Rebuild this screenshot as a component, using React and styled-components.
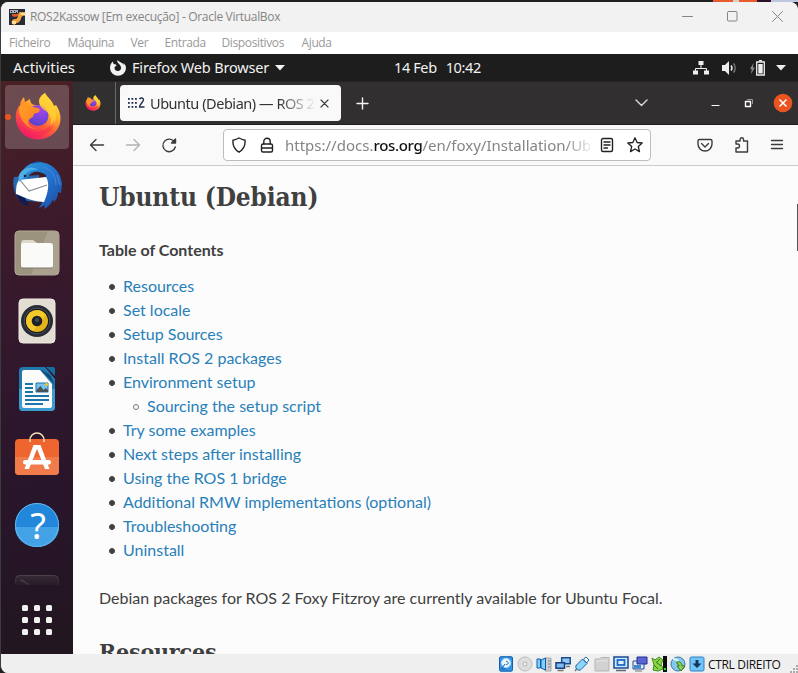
import React from 'react';
import styled, { createGlobalStyle } from 'styled-components';

const Global = createGlobalStyle`
  *, *::before { box-sizing: border-box; }
  body { margin: 0; background: #202020; overflow: hidden; }
  svg { display: block; flex: none; }
`;

const UI = '"Noto Sans", "Open Sans", sans-serif';

const Desktop = styled.div`
  width: 798px; height: 673px; display: flex; flex-direction: column;
  background: #202020; overflow: hidden;
`;
const DesktopStrip = styled.div`
  height: 2px; flex: none; display: flex; justify-content: flex-end;
  background: #222122;
`;
const StripPiece = styled.div`
  width: ${(p) => p.$w}px; background: ${(p) => p.$c};
`;
const Window = styled.div`
  flex: 1; min-height: 0; display: flex; flex-direction: column;
  border-left: 1px solid #3c3c3c; border-radius: 8px 8px 0 8px; overflow: hidden;
  background: #efefef;
`;
const TitleBar = styled.header`
  height: 30px; flex: none; display: flex; align-items: center;
  padding: 0 15px 0 8px; background: #f2f2f2;
  font: 12px "Open Sans", sans-serif; letter-spacing: -0.31px; color: #858585;
`;
const TitleText = styled.span`
  margin-left: 5px; flex: 1; white-space: nowrap; line-height: 28px;
`;
const WindowControls = styled.div`
  display: flex; gap: 34px; align-items: center; margin-bottom: 2px;
`;
const MenuBar = styled.nav`
  height: 22px; flex: none; display: flex; align-items: center;
  padding-left: 8px; background: #fff; white-space: nowrap;
  font: 12px/22px "Open Sans", sans-serif; letter-spacing: -0.37px; color: #999;
`;
const MenuItem = styled.span`
  width: ${(p) => p.$w}px; height: 22px;
`;
const Guest = styled.div`
  height: 600px; flex: none; display: flex; flex-direction: column;
`;
const TopBar = styled.div`
  height: 27px; flex: none; display: grid; grid-template-columns: 393px 299px 1fr;
  align-items: center; background: #1d1d1d; color: #f2f2f2;
  font: 15px/27px ${UI}; white-space: nowrap;
`;
const TopLeft = styled.div`
  display: flex; align-items: center; padding-left: 12px;
`;
const Activities = styled.span`
  width: 97px; letter-spacing: -0.05px;
`;
const AppName = styled.span`
  width: 138px; margin: 0 5px 0 6px; font-size: 14.5px; letter-spacing: -0.16px;
`;
const Clock = styled.div`
  display: flex; gap: 9px; font-size: 14.5px; letter-spacing: -0.38px;
`;
const Tray = styled.div`
  display: flex; align-items: center;
  svg + svg { margin-left: 13px; }
  svg:nth-child(3) { margin-left: 12px; }
  svg:last-child { margin-left: 10px; }
`;
const Workspace = styled.div`
  flex: 1; min-height: 0; display: flex;
`;
const Dock = styled.aside`
  width: 72px; flex: none; display: flex; flex-direction: column; align-items: center;
  padding-top: 4px;
  background: linear-gradient(170deg, #4a2025 0%, #3b1a2c 28%, #2e172c 55%, #28152a 75%, #21161f 100%);
`;
const DockTile = styled.div`
  position: relative; width: 64px; height: 64px; flex: none; margin-bottom: 4px;
  border-radius: 4px; background: ${(p) => (p.$active ? 'rgba(255,255,255,.2)' : 'transparent')};
`;
const RunningDot = styled.i`
  position: absolute; left: 0; top: 29px; width: 6px; height: 6px;
  border-radius: 50%; background: #e95420;
`;
const DockCut = styled.div`
  width: 44px; height: 10px; margin-top: 14px; overflow: hidden; flex: none;
  mask-image: linear-gradient(#000, rgba(0,0,0,.3));
`;
const AppGrid = styled.div`
  display: grid; grid-template-columns: repeat(3, 6px); gap: 6px; margin-top: 20px;
`;
const AppDot = styled.i`
  width: 6px; height: 6px; border-radius: 1.5px; background: #f1f1ef;
`;
const Browser = styled.main`
  flex: 1; min-width: 0; display: flex; flex-direction: column; background: #fcfcfc;
`;
const TabStrip = styled.div`
  height: 44px; flex: none; display: flex; align-items: center;
  background: #322f30; border-top: 1px solid #262425; border-bottom: 1px solid #201e1f;
`;
const PinnedTab = styled.div`
  width: 43px; height: 100%; display: flex; align-items: center; padding-left: 12px;
  border-right: 1px solid #6b696a;
`;
const Tab = styled.div`
  width: 221px; height: 36px; margin: 0 15px 0 4px; display: flex; align-items: center;
  padding: 0 12px 0 8px; border-radius: 4px; background: #f9f9fa;
`;
const TabLabel = styled.span`
  flex: 1; min-width: 0; margin-left: 5px; overflow: hidden; white-space: nowrap;
  font: 14.5px/36px ${UI}; letter-spacing: -0.46px; color: #333;
  mask-image: linear-gradient(90deg, #000 128px, transparent 166px);
`;
const TabStripEnd = styled.div`
  flex: 1; display: flex; align-items: center; justify-content: flex-end;
  padding-right: 5px;
`;
const Spacer = styled.span`
  width: ${(p) => p.$w}px; flex: none;
`;
const NavBar = styled.div`
  height: 41px; flex: none; display: flex; align-items: center;
  padding-left: 15px; background: #f9f9fa; border-bottom: 1px solid #cbcbcd;
`;
const NavButtons = styled.div`
  width: 135px; display: flex; gap: 18px; align-items: center;
`;
const AddressBar = styled.div`
  width: 428px; height: 32px; display: flex; align-items: center; padding: 0 7px;
  background: #fff; border: 1px solid #bdbdbf; border-radius: 4px;
`;
const Url = styled.span`
  width: 308px; margin: 0 6px 0 10px; overflow: hidden; white-space: nowrap;
  font: 15px/30px ${UI}; color: #858587;
  mask-image: linear-gradient(90deg, #000 280px, transparent 310px);
  b { font-weight: 500; color: #111; letter-spacing: -0.32px; }
`;
const NavActions = styled.div`
  display: flex; gap: 18px; align-items: center; margin-left: 45px;
`;
const Page = styled.div`
  flex: 1; min-height: 0; display: flex; justify-content: space-between; overflow: hidden;
`;
const Article = styled.article`
  padding: 11px 0 0 26px; color: #404040; font: 16px/24px Lato, sans-serif;
`;
const Heading = styled.h1`
  margin: 0; height: ${(p) => p.$h}px; white-space: nowrap;
  font: bold ${(p) => p.$size}px/${(p) => p.$lh}px "DejaVu Serif Condensed", "DejaVu Serif", serif;
  font-stretch: condensed;
  letter-spacing: ${(p) => p.$ls}px;
`;
const TocTitle = styled.p`
  margin: 0 0 12px; font-weight: bold;
`;
const Toc = styled.ul`
  margin: 0; padding: 0 0 0 10px; list-style: none;
`;
const SubToc = styled(Toc)`
  padding-left: 24px;
`;
const TocItem = styled.li`
  height: 24px; color: #2980b9;
  &::before {
    content: ''; display: inline-block; width: 6px; height: 6px; margin-right: 8px;
    vertical-align: 2px; border-radius: 50%;
    background: ${(p) => (p.$nested ? 'transparent' : '#404040')};
    border: 1px solid ${(p) => (p.$nested ? '#777' : '#404040')};
  }
`;
const Paragraph = styled.p`
  margin: 24px 0 26px; white-space: nowrap; letter-spacing: 0.002px;
`;
const ScrollThumb = styled.div`
  width: 1px; height: 47px; margin-top: 38px; background: #555;
`;
const StatusBar = styled.footer`
  flex: 1; display: flex; align-items: center; justify-content: flex-end;
  background: #efefef; font: 12px/17px "Open Sans", sans-serif; color: #111;
`;
const StatusIcons = styled.div`
  display: flex; gap: 3.1px; margin: 1px 3px 0 0;
`;
const HostKey = styled.span`
  width: 82px; letter-spacing: -0.32px; white-space: nowrap; padding-top: 2px;
`;

function FirefoxArt({ id, size }) {
  return (
    <svg width={size} height={size} viewBox="0 0 48 48">
      <defs>
        <linearGradient id={id + 'a'} x1=".85" y1="0" x2=".25" y2="1">
          <stop offset="0" stopColor="#fff044" /><stop offset=".35" stopColor="#ffb52b" />
          <stop offset=".62" stopColor="#ff5f38" /><stop offset="1" stopColor="#ee1370" />
        </linearGradient>
        <radialGradient id={id + 'b'} cx=".65" cy=".25" r=".8">
          <stop offset="0" stopColor="#a443ed" /><stop offset="1" stopColor="#5544c9" />
        </radialGradient>
        <linearGradient id={id + 'c'} x1="0" y1="0" x2="1" y2="1">
          <stop offset="0" stopColor="#ffa126" /><stop offset="1" stopColor="#ff7b24" />
        </linearGradient>
      </defs>
      <path fill={`url(#${id}a)`} d="M31 1c2 4 7 7 9 13l2-1c6 8 6 19 0 26-10 12-30 11-37-2C0 28 1 18 6 13c0-3 2-6 4-8l1 5 5-3c0 3 2 6 5 6h5C23 8 27 3 31 1Z" />
      <circle cx="24" cy="23.5" r="10.5" fill={`url(#${id}b)`} />
      <path fill={`url(#${id}c)`} d="M5 17c2-5 5-7 9-5 3 3 6 3 10 4 3 1 2 4-1 5-3 0-4 2-4 4-3 1-5 3-5 6 1 3 4 5 8 6-9 0-17-10-17-20Z" />
      <path fill="#ffd233" opacity=".75" d="M31 1c2 5 8 8 9 14 4 9 2 17-4 20 2-6 1-12-3-15-2-2-6-3-7-7-1-5 2-10 5-12Z" />
      <path fill="#f91f5b" opacity=".4" d="M4 29c5 9 15 13 25 9 6-2 9-6 11-10 0 10-8 17-18 17C13 45 6 39 4 29Z" />
    </svg>
  );
}

const Thunderbird = () => (
  <svg width="64" height="64" viewBox="0 0 64 64">
    <defs>
      <linearGradient id="tb" x1="0" y1="0" x2="1" y2="1">
        <stop offset="0" stopColor="#2a9bd8" /><stop offset=".5" stopColor="#2474cf" /><stop offset="1" stopColor="#1b4aa4" />
      </linearGradient>
    </defs>
    <path fill="#2a66ae" d="M9 24c-2 6 0 17 5 23l20 2V22Z" />
    <path fill="url(#tb)" d="M17 18c4-5 9-9 16-9 13 0 23 9 24 22l-1 9-3-1c0 4-1 7-4 10l-1-3c-1 4-5 8-9 10l1-4-6 3 7-13V22c-6-5-16-5-19 4l-6 2c-3-3-2-8 1-10Z" />
    <path fill="#fff" d="m14 27 27-3c4 6 2 16-2 25-9 0-19-4-28-8 0-5 0-10 3-14Z" />
    <path fill="none" stroke="#8b8b94" strokeWidth="1.1" d="m15 27 9 11 18-6" />
    <path fill="#101b53" d="m11 41 9 4 4 8c-7-1-11-6-13-12Z" />
    <path fill="#4faee4" d="M17 18c6-5 13-4 16-1-7-1-12 2-14 7l-4 5c-3-4-1-8 2-11Z" />
    <path fill="none" stroke="#4b86da" d="M38 14c9 3 13 9 13 18M52 22l3 10" />
    <circle cx="20" cy="23" r="1.3" fill="#221c35" />
    <path fill="#174b9c" d="m36 9-4-1-7 3Z" />
  </svg>
);

const Files = () => (
  <svg width="64" height="64" viewBox="0 0 64 64">
    <rect x="10" y="10" width="44" height="44" rx="4" fill="#9c937f" stroke="#b3aa97" />
    <path d="M43 10h7a4 4 0 0 1 4 4v36a4 4 0 0 1-4 4H26Z" fill="#aaa18e" />
    <path d="M16 22a3 3 0 0 1 3-3h9l4 3v8H16Z" fill="#dcd8ca" />
    <rect x="16" y="22" width="32" height="25" rx="3" fill="#fafaf8" />
    <path d="M17 47h30" stroke="#817967" />
  </svg>
);

const Rhythmbox = () => (
  <svg width="64" height="64" viewBox="0 0 64 64">
    <rect x="14" y="10" width="36" height="44" rx="4" fill="#e3ded4" stroke="#f0ece4" />
    <circle cx="32" cy="32" r="16" fill="#292c36" />
    <circle cx="32" cy="32" r="12.8" fill="#14171d" stroke="#5a5d63" strokeWidth=".8" />
    <circle cx="32" cy="32" r="11" fill="#e4b51b" />
    <path d="M21 32a11 11 0 0 1 20-6L28 42a11 11 0 0 1-7-10Z" fill="#f4c92b" />
    <circle cx="32" cy="32" r="5.3" fill="#1d2026" />
    <circle cx="32" cy="31" r="2.2" fill="#42464f" />
  </svg>
);

const Writer = () => (
  <svg width="64" height="64" viewBox="0 0 64 64">
    <path d="M18 10h22l10 12v28a4 4 0 0 1-4 4H18a4 4 0 0 1-4-4V14a4 4 0 0 1 4-4Z" fill="#2078ad" />
    <path d="M14 32h36v18a4 4 0 0 1-4 4H18a4 4 0 0 1-4-4Z" fill="#3b9cd0" />
    <path d="M41 10h7a2 2 0 0 1 2 2v7Z" fill="#166d9f" />
    <path d="M19 13h16l12 14v22a2 2 0 0 1-2 2H19a2 2 0 0 1-2-2V15a2 2 0 0 1 2-2Z" fill="#fbfbfa" />
    <path d="m35 12 15 16-5-10Z" fill="#0d4c74" />
    <path d="M20 27h8M20 31h8M20 35h8M20 39h24M20 43h24M20 47h18" stroke="#1c76ad" strokeWidth="2" />
    <path d="M31 26h12v9H31Z" fill="#75c3ea" stroke="#1c76ad" />
    <circle cx="41.5" cy="27.5" r="1.6" fill="#f4c52d" />
    <path d="M31.5 35v-2l4-4 3 4 2-2 2.5 2v2Z" fill="#4b5257" />
  </svg>
);

const Software = () => (
  <svg width="64" height="64" viewBox="0 0 64 64">
    <rect x="10" y="14" width="44" height="36" rx="4" fill="#ef6530" />
    <path d="M10 32h44v14a4 4 0 0 1-4 4H14a4 4 0 0 1-4-4Z" fill="#f17b4a" />
    <path d="M25 17v-2a7 7 0 0 1 14 0v2" fill="none" stroke="#f4e2b8" strokeWidth="1.5" />
    <path d="M28.5 20h7l9 24H40L32 24l-8 20h-4.5Z" fill="#fff" />
    <rect x="18" y="35" width="28" height="4.5" rx="2.2" fill="#fff" />
  </svg>
);

const QuestionMark = styled.text`
  font: 36px "Noto Sans", sans-serif; fill: #fff;
`;
const Help = () => (
  <svg width="64" height="64" viewBox="0 0 64 64">
    <circle cx="32" cy="32" r="22" fill="#2287db" />
    <path d="M10 34a22 20 0 0 0 44 0Z" fill="#43a2e6" />
    <circle cx="32" cy="32" r="21.5" fill="none" stroke="#62b5ee" />
    <QuestionMark x="33" y="45.5" textAnchor="middle">?</QuestionMark>
  </svg>
);

const Stroke = ({ w = 16, h = w, c = '#3b3b3d', sw = 1.4, d, children }) => (
  <svg width={w} height={h} viewBox={`0 0 ${w} ${h}`} fill="none" stroke={c} strokeWidth={sw} strokeLinecap="round" strokeLinejoin="round">
    {d && <path d={d} />}{children}
  </svg>
);

const menu = [['Ficheiro', 58.5], ['Máquina', 63], ['Ver', 34], ['Entrada', 57], ['Dispositivos', 80], ['Ajuda', 40]];
const toc = [
  'Resources', 'Set locale', 'Setup Sources', 'Install ROS 2 packages', 'Environment setup',
  'Try some examples', 'Next steps after installing', 'Using the ROS 1 bridge',
  'Additional RMW implementations (optional)', 'Troubleshooting', 'Uninstall',
];

const DeviceIcons = () => (
  <StatusIcons>
    <svg width="16" height="16"><rect x="1.5" y=".7" width="13" height="14.5" rx="1.5" fill="#2f93e6" stroke="#155da9" /><circle cx="8" cy="7" r="4.7" fill="#e9f7ff" stroke="#9bd4fb" /><path d="M8 5.5a1.6 1.6 0 1 1 0 3M7 8l-3.5 5h4" stroke="#1c5fae" fill="none" /></svg>
    <svg width="16" height="16"><circle cx="8" cy="8" r="7" fill="#dedede" stroke="#bcbcbc" /><circle cx="8" cy="8" r="2" fill="#f5f5f5" stroke="#b1b1b1" /></svg>
    <svg width="16" height="16"><path d="M9 2h6v13H9z" fill="#ccc" stroke="#aaa" /><path d="M12 5h3M12 8h3M12 11h3" stroke="#888" /><path d="M1 3h3.500v9H1zM5 4l4.500-2v12L5 12Z" fill="#7fd0fb" stroke="#135baa" /></svg>
    <svg width="16" height="16"><path d="M6.7 1.7h8.500v6H6.700z" fill="#94c8f4" stroke="#194d92" strokeWidth="1.5" /><path d="M1 6.700h8.500v5.500H1z" fill="#7dbcf2" stroke="#193e7b" strokeWidth="1.5" /><path d="M2.500 14.500h6M11 10.500h4" stroke="#777" strokeWidth="1.5" /></svg>
    <svg width="16" height="16"><path d="m2.500 9 6-6 4.500 4.500-6 6c-2.500 2.500-7-2-4.500-4.500Z" fill="#8cd4fa" stroke="#1b62ad" /><path d="m9.500 3 2.500-2 3 3-2.500 3Z" fill="#fff" stroke="#2467a4" /><path d="M3 12.500 1 15" stroke="#777" strokeWidth="1.5" /></svg>
    <svg width="16" height="16"><path d="M1 3h5l1-1.500h8V15H1Z" fill="#d2d2d2" stroke="#b5b5b5" /><path d="M2 5h12" stroke="#e6e6e6" /></svg>
    <svg width="16" height="16"><rect x="1" y="1" width="14" height="11" fill="#cfeaff" stroke="#174a96" strokeWidth="1.5" /><rect x="4.5" y="4" width="7" height="5" fill="#e9f6ff" stroke="#1b69ca" strokeWidth="1.8" /><path d="M3 14.500h10" stroke="#666" strokeWidth="1.5" /></svg>
    <svg width="16" height="16"><path d="M1 5h11v8H1z" fill="#dceeff" stroke="#294c84" /><path d="M5 1h10v7H5z" fill="#5865d2" stroke="#242f91" /><path d="M2 9h7v3.500H2z" fill="#4186cc" /><path d="M3 15h7" stroke="#777" /></svg>
    <svg width="16" height="16"><path d="M12 0h4v16h-4Z" fill="#081108" /><path d="M1 2 4 4l4-3 4 3-2 4 2 5-5 2-5-1 1-5Z" fill="#8bd63f" stroke="#3f8d22" /><path d="m5 6 5 4M3 9l4 4M9 3l-3 3" stroke="#2e7420" /><path d="M13 12h2v2h-2Z" fill="#22df20" /></svg>
    <svg width="16" height="16"><circle cx="8" cy="8" r="7" fill="#83c9ee" stroke="#3c75a4" /><path d="M3 3c4 0 6 2 6 5" stroke="#e6f5fc" strokeWidth="2" fill="none" /><path d="M7 6c3-1 5 1 5 4h3l-4 5-4-5h2c0-2-1-2-2-2Z" fill="#8fd14c" stroke="#357723" /></svg>
    <svg width="16" height="16"><rect x="1" y="1" width="14" height="14" rx="1.5" fill="#71c6f7" stroke="#317fbd" /><path d="M6.500 4h3v3.500h3L8 12 3.500 7.500h3Z" fill="#15365c" /></svg>
  </StatusIcons>
);

const AppGridButton = () => (
  <AppGrid>{Array.from({ length: 9 }, (_, i) => <AppDot key={i} />)}</AppGrid>
);

export default function App() {
  return (
    <Desktop>
      <Global />
      <DesktopStrip>
        <StripPiece $w={20} $c="#e95b2b" /><StripPiece $w={6} $c="#d8cfc8" /><StripPiece $w={18} $c="#e95b2b" />
        <StripPiece $w={14} $c="#2d1028" /><StripPiece $w={27} $c="#bfc6df" />
      </DesktopStrip>
      <Window>
        <TitleBar>
          <svg width="16" height="16" viewBox="0 0 16 16">
            <rect width="16" height="16" fill="#282b36" />
            <path d="M3 15c-1-4 1-5 4-5 3-1 1-6 4-7h5v4c-5-1-3 4-6 6-2 2-4 0-4 3Z" fill="#f2a33f" />
            <path d="M11 4h5v2h-4ZM3 12h4v3H3Z" fill="#ffdc94" />
            <path d="M3 5h6v2L6 8 3 7Z" fill="#d9572d" />
            <path d="M1 1h8v3H1Z" fill="#a9adb2" /><path d="M2 2h1v1H2ZM5 2h1v1H5ZM7 3h1v1H7Z" fill="#222" />
          </svg>
          <TitleText>ROS2Kassow [Em execução] - Oracle VirtualBox</TitleText>
          <WindowControls>
            <Stroke w={11} c="#858585" sw={1} d="M.5 5.500h10" />
            <Stroke w={11} c="#858585" sw={1}><rect x=".5" y=".5" width="9.5" height="9.5" rx="1" /></Stroke>
            <Stroke w={11} c="#858585" sw={1} d="m.5.5 10 10m0-10-10 10" />
          </WindowControls>
        </TitleBar>
        <MenuBar>{menu.map(([t, w]) => <MenuItem key={t} $w={w}>{t}</MenuItem>)}</MenuBar>
        <Guest>
          <TopBar>
            <TopLeft>
              <Activities>Activities</Activities>
              <svg width="16" height="16" viewBox="0 0 16 16"><path fill="#f2f2f2" d="M7.500 0c-1 2 1 3 2 4.500 2 2 2 5 0 6-2 1.500-5 0-5-2.500 0-1 .5-2 2-2L6 4.500 3.500 4 3 1.500C1 3 0 5 0 8a8 7.700 0 0 0 16 0c0-2-1-4-2.500-5l.5 2C12 2 9 2 7.500 0Z" /></svg>
              <AppName>Firefox Web Browser</AppName>
              <svg width="10" height="6"><path fill="#f2f2f2" d="M0 0h10L5 5.500Z" /></svg>
            </TopLeft>
            <Clock><span>14 Feb</span><span>10:42</span></Clock>
            <Tray>
              <svg width="16" height="16"><path d="M8 4v5M2.500 11V8.500h11V11" fill="none" stroke="#eee" /><path fill="#eee" d="M5.500 1h5v4h-5ZM0 10.500h5v4H0ZM11 10.500h5v4h-5Z" /></svg>
              <svg width="16" height="16"><path fill="#eee" d="M0 5h3l4-4v14l-4-4H0Z" /><path d="M9 5.500a4 4 0 0 1 0 5" stroke="#eee" strokeWidth="1.5" fill="none" /><path d="M11.500 3.500a7 7 0 0 1 0 9" stroke="#777" strokeWidth="1.5" fill="none" /></svg>
              <svg width="16" height="16"><path fill="#888" d="M3.500 3 0 9h1.700L1 14l4-6.500H2.900Z" /><path d="M6.700 2h7.600v13H6.700Z" fill="#1d1d1d" stroke="#eee" strokeWidth="1.3" /><path d="M8.300 4h4.400v9.500H8.300ZM9 0h3v1.500H9Z" fill="#eee" /></svg>
              <svg width="10" height="6"><path fill="#eee" d="M0 0h10L5 5.500Z" /></svg>
            </Tray>
          </TopBar>
          <Workspace>
            <Dock>
              <DockTile $active>
                <RunningDot />
                <svg width="64" height="64"><svg x="9" y="7" width="48" height="49"><FirefoxArt id="dock" size={48} /></svg></svg>
              </DockTile>
              {[Thunderbird, Files, Rhythmbox, Writer, Software, Help].map((Icon, i) => <DockTile key={i}><Icon /></DockTile>)}
              <DockCut>
                <svg width="44" height="44"><rect x=".5" y=".5" width="43" height="43" rx="4" fill="#372c36" stroke="#4b424a" /><path d="m6 5 7 4-7 4" fill="none" stroke="#635a63" strokeWidth="1.5" /></svg>
              </DockCut>
              <AppGridButton />
            </Dock>
            <Browser>
              <TabStrip>
                <PinnedTab><FirefoxArt id="tab" size={16} /></PinnedTab>
                <Tab>
                  <svg width="17" height="14" viewBox="0 0 17 14">
                    {[1, 5, 9].map((y) => [0, 3.5, 7].map((x) => <rect key={x + '-' + y} x={x} y={y + 1} width="1.8" height="1.8" fill="#22314e" />))}
                    <path d="M11.500 3c1-1.500 4-1.500 4 .7 0 2-4 4.800-4 7.300h5" fill="none" stroke="#22314e" strokeWidth="1.4" />
                  </svg>
                  <TabLabel>Ubuntu (Debian) — ROS 2</TabLabel>
                  <Stroke w={9} sw={1.2} c="#444" d="m1 1 7 7m0-7-7 7" />
                </Tab>
                <Stroke w={13} c="#f5f5f5" d="M6.500 1v11M1 6.500h11" />
                <TabStripEnd>
                  <Stroke w={13} h={8} c="#ddd" d="m1 1 5.500 5.500L12 1" /><Spacer $w={63} />
                  <Stroke w={9} h={16} c="#fff" sw={1.2} d="M1 10.500h7" /><Spacer $w={24} />
                  <Stroke w={10} c="#fff" sw={1}><path d="M1.500 3.500h5v5h-5Z" strokeWidth="1.4" /><path d="M3.500 1.500h5v4" stroke="#999" /></Stroke><Spacer $w={19} />
                  <svg width="20" height="20"><circle cx="10" cy="10" r="9.3" fill="#e95420" /><path d="m6.500 6.500 7 7m0-7-7 7" stroke="#fff" strokeWidth="1.5" /></svg>
                </TabStripEnd>
              </TabStrip>
              <NavBar>
                <NavButtons>
                  <Stroke w={18} d="M15.500 9H2.500M8 3.500 2.500 9 8 14.500" />
                  <Stroke w={18} c="#b3b3b4" d="M2.500 9h13M10 3.500l5.500 5.500-5.500 5.500" />
                  <Stroke w={18}><path d="M14.500 6A6.300 6.300 0 1 0 15.300 11" /><path d="M15.500 3v4H11.500Z" fill="#3b3b3d" /></Stroke>
                </NavButtons>
                <AddressBar>
                  <Stroke w={16} c="#222" d="M8 1c2 1.200 4 1.800 6 2.200.5 5-1 9-6 12-5-3-6.500-7-6-12C4 2.800 6 2.200 8 1Z" /><Spacer $w={12} />
                  <Stroke w={16} c="#222"><rect x="2.5" y="7" width="11" height="8" rx="1.5" /><path d="M4.800 7V4.500a3.200 3.200 0 0 1 6.400 0V7M3 11h10" /></Stroke>
                  <Url>https://docs.<b>ros.org</b>/en/foxy/Installation/Ub</Url>
                  <Stroke w={16} c="#222"><rect x="2.5" y="1.5" width="11" height="13" rx="1.5" /><path d="M5 5h6M5 8h6M5 11h3.500" /></Stroke><Spacer $w={12} />
                  <Stroke w={16} c="#222" sw={1.3} d="m8 .8 2.100 4.700 5.100.5-3.900 3.500 1.200 5.100L8 12l-4.500 2.600 1.200-5.100L.8 6l5.100-.5Z" />
                </AddressBar>
                <NavActions>
                  <Stroke w={18}><path d="M3.500 3.500h11a1.500 1.500 0 0 1 1.500 1.500v3a7 7 0 0 1-14 0V5a1.500 1.500 0 0 1 1.500-1.500Z" /><path d="m5.500 7.500 3.500 3.500 3.500-3.500" /></Stroke>
                  <Stroke w={18} d="M4 16h11.500V5h-4V3.500a1.700 1.700 0 0 0-3.400 0V5H4v3h1.500a2 2 0 0 1 0 4H4Z" />
                  <Stroke w={18} sw={1.3} d="M3.500 4.500h11M3.500 8.500h11M3.500 12.500h11" />
                </NavActions>
              </NavBar>
              <Page>
                <Article>
                  <Heading $size={26} $lh={40} $h={61} $ls={-0.14}>Ubuntu (Debian)</Heading>
                  <TocTitle>Table of Contents</TocTitle>
                  <Toc>
                    {toc.map((t) => (
                      <React.Fragment key={t}>
                        <TocItem>{t}</TocItem>
                        {t === 'Environment setup' && <SubToc><TocItem $nested>Sourcing the setup script</TocItem></SubToc>}
                      </React.Fragment>
                    ))}
                  </Toc>
                  <Paragraph>Debian packages for ROS 2 Foxy Fitzroy are currently available for Ubuntu Focal.</Paragraph>
                  <Heading as="h2" $size={23} $lh={32} $h={32} $ls={-0.2}>Resources</Heading>
                </Article>
                <ScrollThumb />
              </Page>
            </Browser>
          </Workspace>
        </Guest>
        <StatusBar>
          <DeviceIcons />
          <HostKey>CTRL DIREITO</HostKey>
          <svg width="8" height="19"><path fill="#aaa" d="M6 11h2v2H6ZM3 14h2v2H3ZM6 14h2v2H6ZM0 17h2v2H0ZM3 17h2v2H3ZM6 17h2v2H6Z" /></svg>
        </StatusBar>
      </Window>
    </Desktop>
  );
}
